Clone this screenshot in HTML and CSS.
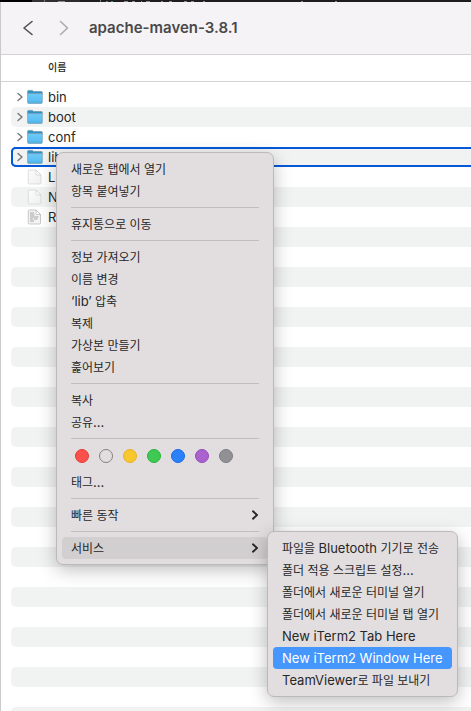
FILE: index.html
```html
<!DOCTYPE html>
<html lang="ko">
<head>
<meta charset="utf-8">
<title>apache-maven-3.8.1</title>
<link rel="stylesheet" href="styles.css">
</head>
<body>
<svg class="defs" aria-hidden="true">
  <defs>
    <linearGradient id="front" x1="0" y1="0" x2="0" y2="1"><stop offset="0" stop-color="#6ccbfa"/><stop offset="1" stop-color="#55b9ee"/></linearGradient>
    <linearGradient id="paper" x1="0" y1="0" x2="1" y2="1"><stop offset="0" stop-color="#fcfcfc"/><stop offset="1" stop-color="#efefef"/></linearGradient>
  </defs>
  <symbol id="folder" viewBox="0 0 16 16">
    <path d="M.6 4.800V2.200Q.6 1.400 1.400 1.400H5.300L6.600 2.500H14.400Q15.300 2.500 15.300 3.400V4.800Z" fill="#2b93c9" stroke="#7596a6" stroke-width=".7"/>
    <path d="M.6 4.600H15.300V13.500Q15.300 14.500 14.300 14.500H1.600Q.6 14.500.6 13.500Z" fill="url(#front)" stroke="#7b9cac" stroke-width=".7"/>
    <path d="M1 13H15" stroke="#4fa9d8" stroke-width=".7"/>
  </symbol>
  <symbol id="file" viewBox="0 0 16 16">
    <path d="M2.300 1H9L14 6V14Q14 15 13 15H2.300Q1.300 15 1.300 14V2Q1.300 1 2.300 1Z" fill="url(#paper)" stroke="#d2d2d2" stroke-width=".7"/>
    <path d="M9 1V5Q9 6 10 6H14Z" fill="#fff" stroke="#cacaca" stroke-width=".7"/>
  </symbol>
  <symbol id="text" viewBox="0 0 16 16">
    <path d="M2.300 1H9L13.500 5.500V14Q13.500 15 12.500 15H2.300Q1.300 15 1.300 14V2Q1.300 1 2.300 1Z" fill="#f4f4f4" stroke="#b4b4b4" stroke-width=".7"/>
    <path d="M9 1V4.500Q9 5.500 10 5.500H13.500Z" fill="#fff" stroke="#b4b4b4" stroke-width=".7"/>
    <path d="M3 4H7M3 6H7.500M3 8H11.500M3 10H6M7 10H10.500M3 12H7" stroke="#8f8f8f" stroke-width=".8"/>
  </symbol>
  <symbol id="disclose" viewBox="0 0 8 10"><path d="M2 1.500L6 5L2 8.500" fill="none" stroke="#777" stroke-width="1.400" stroke-linecap="round" stroke-linejoin="round"/></symbol>
  <symbol id="more" viewBox="0 0 8 10"><path d="M2 1.300L6 5L2 8.700" fill="none" stroke="#252325" stroke-width="1.900" stroke-linecap="round" stroke-linejoin="round"/></symbol>
</svg>
<div class="backdrop" aria-hidden="true">
  <svg width="360" height="2" viewBox="0 0 360 2">
    <path d="M44.500 0V2M100.500 0V2" stroke="#777"/>
    <path d="M58 1.500H65M124 1.500H128M132 1.500H135M141 1.500H142M146 1.500H150M161 1.500H163M169 1.500H172M184 1.500H187M191 1.500H194M203 1.500H205M301 1.500H303M335 1.500H337" stroke="#8d8b8c"/>
    <path d="M106 1.500H108M111 1.500H113" stroke="#4c8698"/>
  </svg>
</div>
<main class="window">
  <header class="toolbar">
    <button class="nav" aria-label="뒤로"><svg viewBox="0 0 12 16"><path d="M10 1.500L2 8L10 14.500"/></svg></button>
    <button class="nav forward" aria-label="앞으로"><svg viewBox="0 0 12 16"><path d="M2.500 1.500L9.500 8L2.500 14.500"/></svg></button>
    <h1>apache-maven-3.8.1</h1>
  </header>
  <table class="files">
    <thead><tr><th scope="col">이름</th></tr></thead>
    <tbody>
      <tr><td><div class="row"><button class="toggle" aria-label="펼치기"><svg><use href="#disclose"/></svg></button><svg class="icon"><use href="#folder"/></svg>bin</div></td></tr>
      <tr><td><div class="row"><button class="toggle" aria-label="펼치기"><svg><use href="#disclose"/></svg></button><svg class="icon"><use href="#folder"/></svg>boot</div></td></tr>
      <tr><td><div class="row"><button class="toggle" aria-label="펼치기"><svg><use href="#disclose"/></svg></button><svg class="icon"><use href="#folder"/></svg>conf</div></td></tr>
      <tr><td><div class="row target"><button class="toggle" aria-label="펼치기"><svg><use href="#disclose"/></svg></button><svg class="icon"><use href="#folder"/></svg>lib</div></td></tr>
      <tr><td><div class="row"><span class="toggle"></span><svg class="icon"><use href="#file"/></svg>LICENSE</div></td></tr>
      <tr><td><div class="row"><span class="toggle"></span><svg class="icon"><use href="#file"/></svg>NOTICE</div></td></tr>
      <tr><td><div class="row"><span class="toggle"></span><svg class="icon"><use href="#text"/></svg>README.txt</div></td></tr>
      <tr><td><div class="row"></div></td></tr>
      <tr><td><div class="row"></div></td></tr>
      <tr><td><div class="row"></div></td></tr>
      <tr><td><div class="row"></div></td></tr>
      <tr><td><div class="row"></div></td></tr>
      <tr><td><div class="row"></div></td></tr>
      <tr><td><div class="row"></div></td></tr>
      <tr><td><div class="row"></div></td></tr>
      <tr><td><div class="row"></div></td></tr>
      <tr><td><div class="row"></div></td></tr>
      <tr><td><div class="row"></div></td></tr>
      <tr><td><div class="row"></div></td></tr>
      <tr><td><div class="row"></div></td></tr>
      <tr><td><div class="row"></div></td></tr>
      <tr><td><div class="row"></div></td></tr>
      <tr><td><div class="row"></div></td></tr>
      <tr><td><div class="row"></div></td></tr>
      <tr><td><div class="row"></div></td></tr>
      <tr><td><div class="row"></div></td></tr>
      <tr><td><div class="row"></div></td></tr>
      <tr><td><div class="row"></div></td></tr>
      <tr><td><div class="row"></div></td></tr>
      <tr><td><div class="row"></div></td></tr>
      <tr><td><div class="row"></div></td></tr>
      <tr><td><div class="row"></div></td></tr>
    </tbody>
  </table>
</main>
<div class="menu context" role="menu">
  <button role="menuitem">새로운 탭에서 열기</button>
  <button role="menuitem">항목 붙여넣기</button>
  <hr>
  <button role="menuitem">휴지통으로 이동</button>
  <hr>
  <button role="menuitem">정보 가져오기</button>
  <button role="menuitem">이름 변경</button>
  <button role="menuitem"><span class="latin">‘lib’</span> 압축</button>
  <button role="menuitem">복제</button>
  <button role="menuitem">가상본 만들기</button>
  <button role="menuitem">훑어보기</button>
  <hr>
  <button role="menuitem">복사</button>
  <button role="menuitem">공유<span class="latin">...</span></button>
  <hr>
  <div class="tags">
    <button class="tag red" aria-label="빨간색"></button>
    <button class="tag none" aria-label="주황색"></button>
    <button class="tag yellow" aria-label="노란색"></button>
    <button class="tag green" aria-label="초록색"></button>
    <button class="tag blue" aria-label="파란색"></button>
    <button class="tag purple" aria-label="보라색"></button>
    <button class="tag gray" aria-label="회색"></button>
  </div>
  <button role="menuitem">태그<span class="latin">...</span></button>
  <hr>
  <button role="menuitem" class="parent"><span>빠른 동작</span><svg><use href="#more"/></svg></button>
  <hr>
  <button role="menuitem" class="parent open"><span>서비스</span><svg><use href="#more"/></svg></button>
</div>
<div class="menu services" role="menu">
  <button role="menuitem">파일을 <span class="latin">Bluetooth</span> 기기로 전송</button>
  <button role="menuitem">폴더 적용 스크립트 설정<span class="latin">...</span></button>
  <button role="menuitem">폴더에서 새로운 터미널 열기</button>
  <button role="menuitem">폴더에서 새로운 터미널 탭 열기</button>
  <button role="menuitem"><span class="latin">New iTerm2 Tab Here</span></button>
  <button role="menuitem" class="active"><span class="latin">New iTerm2 Window Here</span></button>
  <button role="menuitem"><span class="latin">TeamViewer</span>로 파일 보내기</button>
</div>
</body>
</html>
```
FILE: styles.css
```css
* { box-sizing: border-box; }
body {
  margin: 0;
  height: 100vh;
  overflow: hidden;
  display: flex;
  flex-direction: column;
  background: #fff;
  color: #272727;
  font: 13px/20px Inter, "Noto Sans CJK KR", sans-serif;
}
button {
  margin: 0;
  padding: 0;
  border: 0;
  background: none;
  color: inherit;
  font: inherit;
}
svg { display: block; }
.defs { position: absolute; width: 0; height: 0; }
.backdrop {
  flex: none;
  height: 2px;
  background: linear-gradient(90deg, #000 32px, #343334 32px, #2b2a2b 80px, #1f1c1e 80px);
}
.window {
  flex: 1;
  min-height: 0;
  overflow: hidden;
  border-left: 1px solid #cbcacb;
}
.toolbar {
  height: 53px;
  display: flex;
  align-items: center;
  padding-left: 21px;
  background: #f5f3f5;
  border-bottom: 1px solid #d3d2d3;
}
.nav { width: 12px; height: 16px; margin-right: 24px; }
.nav svg { width: 12px; height: 16px; fill: none; stroke: #505050; stroke-width: 1.600; stroke-linecap: round; stroke-linejoin: round; }
.forward { margin-right: 19px; }
.forward svg { stroke: #adabad; }
h1 { margin: 0; font-size: 15px; font-weight: 600; line-height: 20px; color: #4a494a; }
.files { width: 100%; border-collapse: separate; border-spacing: 0; }
.files th {
  height: 27px;
  padding: 0 0 2px 47px;
  border-bottom: 1px solid #d5d4d5;
  text-align: left;
  font: 500 10px/20px "Noto Sans CJK KR", sans-serif;
}
.files tbody::before { content: ""; display: block; height: 5px; }
.files td { padding: 0 0 0 10px; }
.row {
  height: 20px;
  display: flex;
  align-items: center;
  padding-left: 5px;
  border-radius: 5px 0 0 5px;
}
.files tr:nth-child(even) .row { background: #f1f3f3; }
.row.target { box-shadow: inset 2px 0 #0559d9, inset 0 2px #0559d9, inset 0 -2px #0559d9; }
.toggle { width: 8px; height: 10px; margin-right: 3px; }
.toggle svg { width: 8px; height: 10px; }
.icon { width: 16px; height: 16px; margin-right: 5px; }
.menu {
  position: absolute;
  display: flex;
  flex-direction: column;
  padding: 5px;
  border: 1px solid #bcb9bb;
  border-radius: 7px;
  background: #e2dedf;
  box-shadow: 0 5px 18px rgba(0, 0, 0, .25);
  font: 12px/22px "Noto Sans CJK KR", sans-serif;
}
.context { left: 56px; top: 152px; width: 218px; }
.services { left: 267px; top: 531px; width: 191px; }
.menu [role="menuitem"] {
  height: 22px;
  padding: 0 9px;
  border-radius: 4px;
  text-align: left;
  white-space: nowrap;
}
.latin { font: 13px/20px Inter, sans-serif; }
.menu hr { width: calc(100% - 18px); height: 1px; margin: 5px 9px; border: 0; background: #c1bec0; }
.menu .parent { display: flex; align-items: center; justify-content: space-between; }
.parent svg { width: 8px; height: 10px; }
.menu .open { background: #d2cfd0; }
.menu .active { background: #4596fd; color: #fff; }
.tags { display: flex; gap: 10px; height: 27px; padding: 5px 13px; }
.tag { width: 14px; height: 14px; border: 1px solid; border-radius: 50%; }
.red { background: #fa514a; border-color: #e83b36; }
.none { border-color: #818082; }
.yellow { background: #f8c62f; border-color: #e5b31d; }
.green { background: #40c854; border-color: #27b33a; }
.blue { background: #2c80f8; border-color: #176ae7; }
.purple { background: #a962ce; border-color: #944bbc; }
.gray { background: #919094; border-color: #7d7c80; }
```
